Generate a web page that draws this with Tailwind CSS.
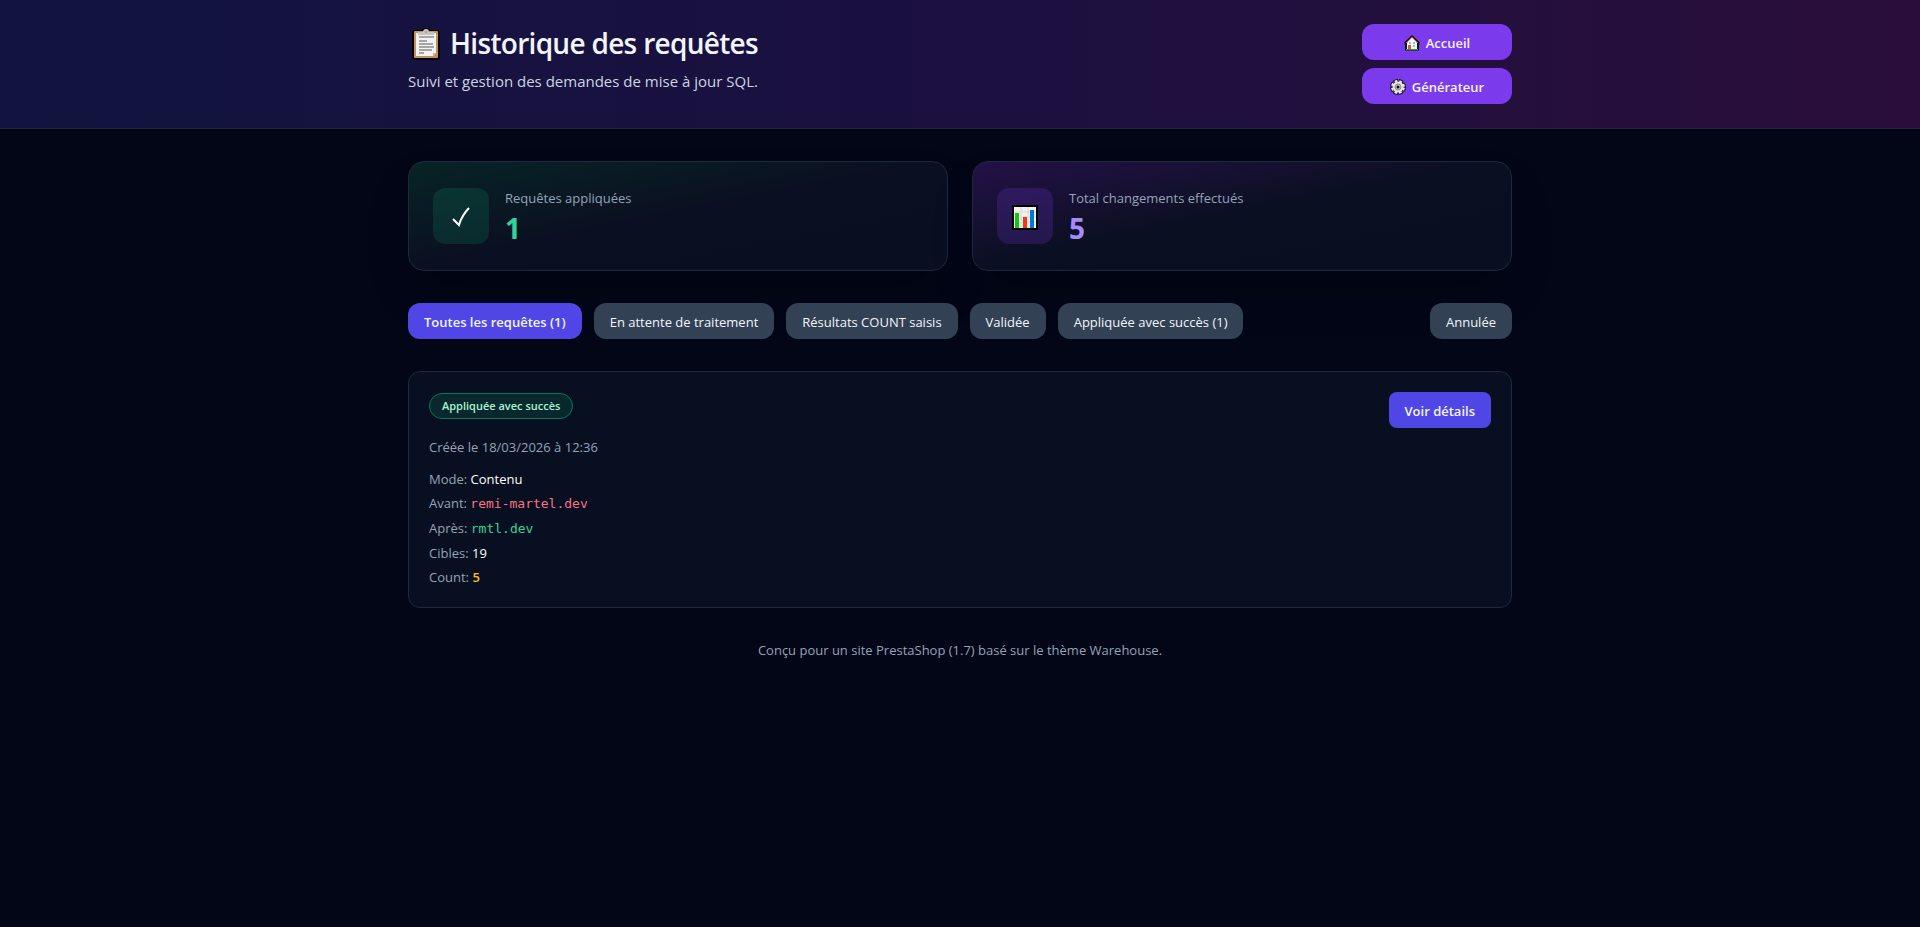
<!DOCTYPE html>
<html lang="fr">
<head>
    <meta charset="UTF-8">
    <meta name="viewport" content="width=device-width, initial-scale=1.0">
    <title>Historique des requêtes</title>
    <script src="https://cdn.jsdelivr.net/npm/@tailwindcss/browser@4"></script>
</head>
<body class="min-h-screen bg-[#020617] text-[#f1f5f9] font-['Segoe_UI','Open_Sans',sans-serif]">
    <header class="border-b border-[#1e293b] bg-linear-to-r from-[#111440] via-[#1b1040] to-[#2a0d3a]">
        <div class="max-w-6xl mx-auto px-6 py-6 flex items-start justify-between">
            <div class="pt-px">
                <h1 class="flex items-center gap-1.5 text-[28px] leading-9 font-semibold tracking-tight">
                    <svg class="w-9 h-9" viewBox="0 -2 36 36" aria-hidden="true">
                        <path d="M6 3h7l2-2h6l2 2h6q3 0 3 3v24q0 3-3 3H7q-3 0-3-3V6q0-3 2-3z" fill="#000"/>
                        <rect x="6" y="4" width="24" height="27" rx="1" fill="#c0915f"/>
                        <path d="M8 6h20v20l-3 3H8z" fill="#f2f2f2"/>
                        <path d="M28 26h-3v3z" fill="#c9b29b"/>
                        <path d="M10 8V5h5q0-3 3-3t3 3h5v3z" fill="#c4c4c4"/>
                        <circle cx="18" cy="5" r="1" fill="#c0915f"/>
                        <path d="M11 10h15M11 14h8M11 17h14M11 20h15M11 23h13M11 26h5" stroke="#5a5a5a" stroke-width="1"/>
                    </svg>
                    Historique des requêtes
                </h1>
                <p class="mt-2 text-[15px] leading-6 text-[#cbd5e1]">Suivi et gestion des demandes de mise à jour SQL.</p>
            </div>
            <nav class="flex flex-col gap-2 w-[150px] text-[13px] leading-5 font-semibold">
                <a href="#" class="flex items-center justify-center gap-1.5 px-4 pt-[9px] pb-[7px] rounded-xl bg-[#7c3aed]">
                    <svg class="w-4 h-4" viewBox="0 0 16 16" aria-hidden="true">
                        <path d="M8 0l7.500 7v2.500H15V15.500H1V9.500H.5V7z" fill="#111"/>
                        <path d="M3 7.500l5-5 5 5V14H3z" fill="#f3f3f3"/>
                        <path d="M2 8l6-6 6 6" fill="none" stroke="#d9412b"/>
                        <path d="M4 10h3v4H4z" fill="#e0523a"/>
                        <path d="M5 7h2v2H5zM9 7h2v2H9zM9 10h2v2H9z" fill="#6fd3f0"/>
                        <path d="M2 14h12v1H2z" fill="#16a716"/>
                    </svg>
                    Accueil
                </a>
                <a href="#" class="flex items-center justify-center gap-1.5 px-4 pt-[9px] pb-[7px] rounded-xl bg-[#7c3aed]">
                    <svg class="w-4 h-4" viewBox="0 0 16 16" aria-hidden="true">
                        <circle cx="8" cy="8" r="6" fill="#111" stroke="#111" stroke-width="4" stroke-dasharray="4 .712"/>
                        <circle cx="8" cy="8" r="5.500" fill="#e6e6e6"/>
                        <circle cx="8" cy="8" r="6" fill="none" stroke="#e6e6e6" stroke-width="2" stroke-dasharray="2.700 2.012" stroke-dashoffset="-.65"/>
                        <circle cx="8" cy="8" r="3" fill="#c4c4c4" stroke="#8a8a8a"/>
                        <circle cx="8" cy="8" r="1.500" fill="#111"/>
                    </svg>
                    Générateur
                </a>
            </nav>
        </div>
    </header>

    <main class="max-w-6xl mx-auto px-6 py-8">
        <!-- Stats -->
        <section class="grid grid-cols-2 gap-6 mb-8">
            <div class="flex items-center gap-4 p-6 rounded-2xl border border-[#1e293b] bg-linear-to-br from-[#062426] via-[#0a0f21] to-[#080f20] shadow-2xl shadow-black/30">
                <div class="w-14 h-14 rounded-xl bg-[#10b981]/15 flex items-center justify-center">
                    <svg class="w-6 h-6" viewBox="0 0 24 24" fill="none" stroke="#fff" stroke-width="2" aria-hidden="true">
                        <path d="M4 15l6 6Q13 11 20 4"/>
                    </svg>
                </div>
                <div class="pt-0.5">
                    <p class="text-[13px] leading-5 text-[#94a3b8]">Requêtes appliquées</p>
                    <p class="mt-0.5 text-[28px] leading-9 font-bold text-[#34d399]">1</p>
                </div>
            </div>
            <div class="flex items-center gap-4 p-6 rounded-2xl border border-[#1e293b] bg-linear-to-br from-[#241048] via-[#0a0f21] to-[#080f20] shadow-2xl shadow-black/30">
                <div class="w-14 h-14 rounded-xl bg-[#7c3aed]/20 flex items-center justify-center">
                    <svg class="w-7 h-7" viewBox="0 0 28 28" aria-hidden="true">
                        <path d="M1 3h26v25H1z" fill="#000"/>
                        <path d="M3 5h22v21H3z" fill="#f2f2f2"/>
                        <path d="M3 10h22M3 15h22M3 20h22M10 5v21M17 5v21" stroke="#d8d8d8"/>
                        <path d="M4 11h4v15H4z" fill="#16c60c"/>
                        <path d="M12 15h4v11h-4z" fill="#f03a17"/>
                        <path d="M19 8h4v18h-4z" fill="#0078d7"/>
                    </svg>
                </div>
                <div class="pt-0.5">
                    <p class="text-[13px] leading-5 text-[#94a3b8]">Total changements effectués</p>
                    <p class="mt-0.5 text-[28px] leading-9 font-bold text-[#a78bfa]">5</p>
                </div>
            </div>
        </section>

        <!-- Filters -->
        <div class="flex gap-3 mb-8 text-[13px] leading-5">
            <button type="button" class="px-4 pt-[9px] pb-[7px] rounded-xl bg-[#4f46e5] font-semibold">Toutes les requêtes (1)</button>
            <button type="button" class="px-4 pt-[9px] pb-[7px] rounded-xl bg-[#334155]">En attente de traitement</button>
            <button type="button" class="px-4 pt-[9px] pb-[7px] rounded-xl bg-[#334155]">Résultats COUNT saisis</button>
            <button type="button" class="px-4 pt-[9px] pb-[7px] rounded-xl bg-[#334155]">Validée</button>
            <button type="button" class="px-4 pt-[9px] pb-[7px] rounded-xl bg-[#334155]">Appliquée avec succès (1)</button>
            <button type="button" class="ml-auto px-4 pt-[9px] pb-[7px] rounded-xl bg-[#334155]">Annulée</button>
        </div>

        <!-- Requests -->
        <article class="flex items-start justify-between p-5 rounded-xl border border-[#1e293b] bg-[#080f20] text-[13px] leading-5 text-[#94a3b8]">
            <div class="pt-px">
                <span class="inline-block px-3 py-1 rounded-full border border-[#047857] bg-[#08282d] text-[11px] leading-4 font-semibold text-[#a7f3d0]">Appliquée avec succès</span>
                <p class="mt-[18px]">Créée le 18/03/2026 à 12:36</p>
                <div class="mt-3 space-y-1">
                    <p>Mode: <span class="text-white">Contenu</span></p>
                    <p>Avant: <code class="font-['DejaVu_Sans_Mono',monospace] text-[#fb7185]">remi-martel.dev</code></p>
                    <p>Après: <code class="font-['DejaVu_Sans_Mono',monospace] text-[#34d399]">rmtl.dev</code></p>
                    <p>Cibles: <span class="text-white">19</span></p>
                    <p>Count: <span class="font-semibold text-[#fbbf24]">5</span></p>
                </div>
            </div>
            <button type="button" class="px-4 pt-[9px] pb-[7px] rounded-lg bg-[#4f46e5] font-semibold text-[#f1f5f9]">Voir détails</button>
        </article>

        <footer class="mt-8 text-center text-[13px] leading-5 text-[#94a3b8]">
            Conçu pour un site PrestaShop (1.7) basé sur le thème Warehouse.
        </footer>
    </main>
</body>
</html>
